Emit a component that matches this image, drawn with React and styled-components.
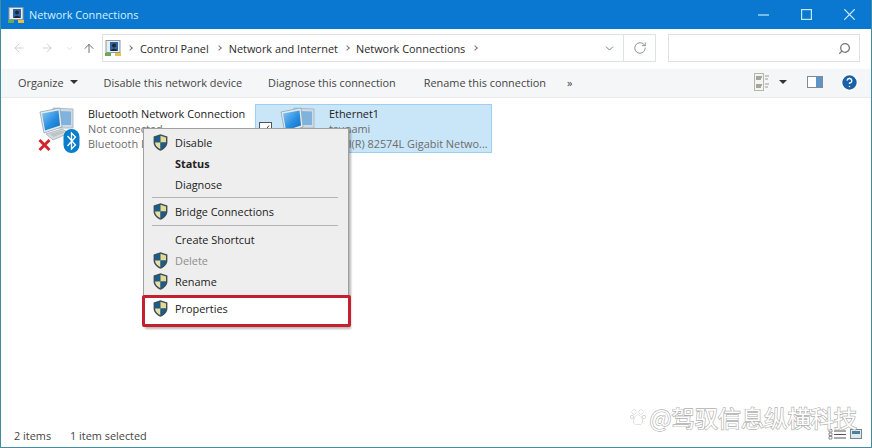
import React from 'react';
import styled, { createGlobalStyle } from 'styled-components';
import { ArrowLeft, ArrowRight, ArrowUp, ChevronDown, RotateCw, Search, HelpCircle } from 'lucide-react';

const GlobalStyle = createGlobalStyle`
  html, body {
    margin: 0;
    padding: 0;
    height: 100%;
    background: #fff;
    overflow: hidden;
  }
  * { box-sizing: border-box; }
`;

const Window = styled.div`
  position: relative;
  width: 872px;
  height: 448px;
  display: flex;
  flex-direction: column;
  overflow: hidden;
  background: #fff;
  border-left: 1px solid #3f8f9f;
  border-right: 1px solid #3f8f9f;
  border-bottom: 1px solid #3f8f9f;
  font-family: 'Open Sans', 'Noto Sans', sans-serif;
  font-size: 10.9px;
  color: #222;
`;

const TitleBar = styled.div`
  height: 29px;
  margin: 0 -1px;
  flex: none;
  background: #0a78d0;
  color: #d5f0fa;
  display: flex;
  align-items: center;
  padding: 0 1px 0 8px;
  font-size: 10.9px;
`;

const TitleText = styled.span`
  margin-left: 5px;
  flex: 1;
`;

const WinButton = styled.div`
  width: 43px;
  height: 29px;
  display: flex;
  align-items: center;
  justify-content: center;
`;

const AddressRow = styled.div`
  height: 40px;
  flex: none;
  display: flex;
  align-items: center;
  padding: 0 0 2px 11px;
  background: #fff;
`;

const NavButton = styled.div`
  width: ${p => p.$w}px;
  margin-left: ${p => p.$ml || 0}px;
  display: flex;
  justify-content: center;
  color: ${p => p.$dark ? '#666' : '#c9cdd0'};
`;

const AddressBox = styled.div`
  width: 554px;
  height: 28px;
  margin-left: 6px;
  border: 1px solid #dfe2e4;
  display: flex;
  align-items: center;
  padding-left: 2px;
  color: #2a2a2a;
`;

const Crumb = styled.span`
  margin-left: ${p => p.$gap || 8}px;
  white-space: nowrap;
`;

const CrumbArrow = styled.span`
  margin-left: ${p => p.$gap || 8}px;
  width: 4px;
  height: 4px;
  border-top: 1px solid #777;
  border-right: 1px solid #777;
  transform: rotate(45deg);
`;

const AddressEnd = styled.div`
  margin-left: auto;
  display: flex;
  align-items: center;
  height: 100%;
`;

const AddressDrop = styled.div`
  width: 31px;
  height: 100%;
  padding-left: 3px;
  display: flex;
  align-items: center;
  justify-content: center;
  color: #777;
  border-right: 1px solid #dfe2e4;
`;

const Refresh = styled.div`
  width: 31px;
  display: flex;
  justify-content: center;
  color: #888;
`;

const SearchBox = styled.div`
  width: 192px;
  height: 28px;
  margin-left: 12px;
  border: 1px solid #dfe2e4;
  display: flex;
  align-items: center;
  justify-content: flex-end;
  padding-right: 8px;
  color: #777;
`;

const Toolbar = styled.div`
  height: 29px;
  flex: none;
  display: flex;
  align-items: center;
  background: #f5f6f7;
  border-bottom: 1px solid #eaebec;
  padding: 0 0 2px 17px;
  color: #444;
`;

const ToolItem = styled.span`
  margin-right: ${p => p.$mr}px;
  display: flex;
  align-items: center;
  white-space: nowrap;
`;

const Caret = styled.span`
  width: 0;
  height: 0;
  margin-left: ${p => p.$ml || 6}px;
  border-left: 4px solid transparent;
  border-right: 4px solid transparent;
  border-top: 4px solid #333;
`;

const ToolEnd = styled.div`
  margin-left: auto;
  display: flex;
  align-items: center;
  padding-right: 12px;
`;

const ToolGap = styled.span`
  width: ${p => p.$w}px;
`;

const Content = styled.div`
  flex: 1;
  display: flex;
  align-items: flex-start;
  padding: 6px 0 0 17px;
`;

const Item = styled.div`
  width: 237px;
  height: 49px;
  display: flex;
  padding-left: ${p => p.$selected ? 23 : 19}px;
  background: ${p => p.$selected ? '#c9e5f8' : 'transparent'};
  border: 1px solid ${p => p.$selected ? '#9dd0ee' : 'transparent'};
  position: relative;
`;

const ItemIcon = styled.div`
  width: 50px;
  flex: none;
  position: relative;
`;

const ItemText = styled.div`
  display: flex;
  flex-direction: column;
  padding-top: 1px;
  line-height: 15px;
  white-space: nowrap;
  color: #6d6d6d;
`;

const ItemName = styled.span`
  color: #222;
`;

const Check = styled.svg`
  position: absolute;
  left: 3px;
  top: 17px;
`;

const Menu = styled.div`
  position: absolute;
  left: 142px;
  top: 128px;
  width: 206px;
  background: #eeeeee;
  border: 1px solid #a0a0a0;
  border-bottom: none;
  box-shadow: 2px 2px 2px rgba(0, 0, 0, 0.28);
  padding-top: 3px;
  display: flex;
  flex-direction: column;
`;

const MenuItem = styled.div`
  height: 21px;
  display: flex;
  align-items: center;
  padding-left: 9px;
  color: ${p => p.$disabled ? '#8d8d8d' : '#222'};
  font-weight: ${p => p.$bold ? 700 : 400};
`;

const MenuIcon = styled.span`
  width: 22px;
  flex: none;
  display: flex;
`;

const Separator = styled.div`
  height: 1px;
  margin: ${p => p.$top}px 10px ${p => p.$bottom}px 8px;
  background: #b4b4b4;
`;

const Highlight = styled.div`
  height: 32px;
  margin: 3px -3px 0 -2px;
  position: relative;
  background: #fff;
  border: 3px solid #c4202f;
  border-radius: 2px;
  display: flex;
  align-items: center;
  padding: 0 0 5px 8px;
`;

const StatusBar = styled.div`
  height: 22px;
  flex: none;
  display: flex;
  align-items: center;
  padding: 0 9px 1px 13px;
  color: #444;
`;

const StatusCount = styled.span`
  width: 56px;
`;

const ViewIcons = styled.div`
  margin: 0 0 3px auto;
  display: flex;
  align-items: center;
  gap: 3px;
`;

const Watermark = styled.div`
  position: absolute;
  right: 14px;
  top: 403px;
  display: flex;
  align-items: center;
  gap: 4px;
  font-family: 'Noto Sans CJK SC', 'Open Sans', sans-serif;
  font-size: 23.2px;
  line-height: 28px;
  color: #fff;
  -webkit-text-stroke: 1.3px #b0b0b0;
  paint-order: stroke fill;
  white-space: nowrap;
`;

const Shield = () => (
  <svg width="15" height="17" viewBox="0 0 15 17">
    <path d="M7.5 .3 L14.4 2.4 V8.5 C14.4 12.5 11 15.2 7.5 16.8 C4 15.2 .6 12.5 .6 8.5 V2.4 Z" fill="#3a4f5c" />
    <path d="M7.5 1.8 V8.5 H2 V3.4 Z" fill="#1d5c86" />
    <path d="M7.5 1.8 L13 3.4 V8.5 H7.5 Z" fill="#e6d994" />
    <path d="M2 8.5 H7.5 V15.2 C4.6 13.8 2.2 11.6 2 8.5 Z" fill="#e9e0a8" />
    <path d="M7.5 8.5 H13 C12.8 11.6 10.4 13.8 7.5 15.2 Z" fill="#1d5c86" />
  </svg>
);

const NetworkIcon = () => (
  <svg width="40" height="40" viewBox="0 0 40 40">
    <defs>
      <linearGradient id="frontScreen" x1="0" y1="0" x2="1" y2="1">
        <stop offset="0" stopColor="#8cc8f2" />
        <stop offset="0.55" stopColor="#2a8fe0" />
        <stop offset="1" stopColor="#0f6cc0" />
      </linearGradient>
    </defs>
    <path d="M15 3 L35 4 V23 L21 23 Z" fill="#cfdbe3" stroke="#9fb0bb" strokeWidth=".8" />
    <path d="M20 6 L33 6.5 V20 L24 20 Z" fill="#7fb2dc" />
    <path d="M2 7 L22 3 L24 22 L6 28 Z" fill="#e3ebf0" stroke="#8fa5b4" strokeWidth=".8" />
    <path d="M4 8.5 L20.5 5.5 L22 20.5 L7 25.5 Z" fill="url(#frontScreen)" />
    <path d="M8 29 L24 24 L31 28 L15 35 Z" fill="#d5dadd" stroke="#a3adb3" strokeWidth=".8" />
    <path d="M12 29 L24 25.5 L27 27.5 L15 32 Z" fill="#bcc4c9" />
  </svg>
);

const BluetoothBadge = styled.svg`
  position: absolute;
  left: 25px;
  top: 24px;
`;

const RedCross = styled.svg`
  position: absolute;
  left: -1px;
  top: 33px;
`;

const WatermarkPaw = () => (
  <svg width="16" height="18" viewBox="0 0 16 18">
    <g fill="#fff" stroke="#b0b0b0" strokeWidth="0.8">
      <circle cx="4" cy="4" r="2" />
      <circle cx="11" cy="4" r="2" />
      <circle cx="2" cy="9" r="1.6" />
      <circle cx="14" cy="9" r="1.6" />
      <path d="M8 7 C11 7 13 12 12 15 C11 17 5 17 4 15 C3 12 5 7 8 7 Z" />
    </g>
  </svg>
);

const ControlPanelIcon = () => (
  <svg width="16" height="16" viewBox="0 0 16 16">
    <rect x="1" y=".5" width="14" height="12" fill="#e8eef0" stroke="#8c9aa0" />
    <rect x="5" y="2" width="8" height="9" fill="#2b62a8" />
    <circle cx="9" cy="5.5" r="2" fill="#20262b" />
    <path d="M6 11 C6 8 12 8 12 11 Z" fill="#20262b" />
    <rect x="0" y="13" width="6" height="3" fill="#67ad4c" />
    <rect x="10" y="13" width="6" height="3" fill="#e8c14a" />
  </svg>
);

const MinimizeGlyph = () => (
  <svg width="11" height="11" viewBox="0 0 11 11">
    <path d="M0 6h11" stroke="#bdeaf5" strokeWidth="1.2" />
  </svg>
);

const MaximizeGlyph = () => (
  <svg width="11" height="11" viewBox="0 0 11 11">
    <rect x=".6" y=".6" width="9.8" height="9.8" fill="none" stroke="#bdeaf5" strokeWidth="1.2" />
  </svg>
);

const CloseGlyph = () => (
  <svg width="11" height="11" viewBox="0 0 11 11">
    <path d="M.3 .3 L10.7 10.7 M10.7 .3 L.3 10.7" stroke="#d5f0fa" strokeWidth="1.2" />
  </svg>
);

const DetailsIcon = () => (
  <svg width="15" height="18" viewBox="0 0 15 18">
    <rect x=".5" y=".5" width="9" height="17" fill="#f4f4f0" stroke="#b5b5a8" />
    <path d="M2 4h6M2 6h5M2 12h6M2 14h5" stroke="#555" />
    <path d="M11 3h4M11 6h3M11 11h4M11 14h3" stroke="#999" />
  </svg>
);

const PaneIcon = () => (
  <svg width="16" height="12" viewBox="0 0 16 12">
    <rect x=".5" y=".5" width="15" height="11" fill="#fff" stroke="#7b8b99" />
    <rect x="9" y="1" width="6" height="10" fill="#5f94c8" />
  </svg>
);

const DetailsSmall = () => (
  <svg width="19" height="11" viewBox="0 0 19 11">
    <path d="M1 .5h3v2.500H1zM1 4h3v2.500H1zM1 7.500h3v2.500H1z" fill="none" stroke="#666" strokeWidth=".7" />
    <path d="M6 2h12M6 5.500h12M6 9h12" stroke="#555" />
  </svg>
);

const LargeSmall = () => (
  <svg width="12" height="10" viewBox="0 0 12 10">
    <rect x=".5" y=".5" width="11" height="9" fill="#dfe8ee" stroke="#6f8797" />
    <rect x="2" y="2" width="8" height="3" fill="#4d7f9f" />
  </svg>
);

export default function App() {
  return (
    <>
      <GlobalStyle />
      <Window>
        <TitleBar>
          <ControlPanelIcon />
          <TitleText>Network Connections</TitleText>
          <WinButton><MinimizeGlyph /></WinButton>
          <WinButton><MaximizeGlyph /></WinButton>
          <WinButton><CloseGlyph /></WinButton>
        </TitleBar>
        <AddressRow>
          <NavButton $w={14}><ArrowLeft size={16} strokeWidth={1.5} /></NavButton>
          <NavButton $w={14} $ml={14}><ArrowRight size={16} strokeWidth={1.5} /></NavButton>
          <NavButton $w={9} $ml={11}><ChevronDown size={9} strokeWidth={1.5} /></NavButton>
          <NavButton $w={14} $ml={8} $dark><ArrowUp size={17} strokeWidth={1.6} /></NavButton>
          <AddressBox>
            <ControlPanelIcon />
            <CrumbArrow $gap={7} />
            <Crumb>Control Panel</Crumb>
            <CrumbArrow />
            <Crumb>Network and Internet</Crumb>
            <CrumbArrow $gap={7} />
            <Crumb $gap={7}>Network Connections</Crumb>
            <CrumbArrow />
            <AddressEnd>
              <AddressDrop><ChevronDown size={13} strokeWidth={1.8} /></AddressDrop>
              <Refresh><RotateCw size={14} strokeWidth={1.5} /></Refresh>
            </AddressEnd>
          </AddressBox>
          <SearchBox><Search size={13} strokeWidth={2.4} style={{ transform: 'scaleX(-1)' }} /></SearchBox>
        </AddressRow>
        <Toolbar>
          <ToolItem $mr={26}>Organize<Caret /></ToolItem>
          <ToolItem $mr={26}>Disable this network device</ToolItem>
          <ToolItem $mr={28}>Diagnose this connection</ToolItem>
          <ToolItem $mr={21}>Rename this connection</ToolItem>
          <ToolItem $mr={0}>»</ToolItem>
          <ToolEnd>
            <DetailsIcon />
            <Caret $ml={10} />
            <ToolGap $w={20} />
            <PaneIcon />
            <ToolGap $w={17} />
            <HelpCircle size={19} fill="#1a62a5" color="#fff" strokeWidth={1.8} />
          </ToolEnd>
        </Toolbar>
        <Content>
          <Item>
            <ItemIcon>
              <NetworkIcon />
              <BluetoothBadge width="17" height="24" viewBox="0 0 16 24">
                <rect x="0" y="0" width="16" height="24" rx="8" fill="#0a7ecb" />
                <path d="M4 7 L12 16 L8 20 V4 L12 8 L4 17" fill="none" stroke="#fff" strokeWidth="1.3" />
              </BluetoothBadge>
              <RedCross width="15" height="14" viewBox="0 0 14 14">
                <path d="M2 2 L12 12 M12 2 L2 12" stroke="#d2262c" strokeWidth="3" />
              </RedCross>
            </ItemIcon>
            <ItemText>
              <ItemName>Bluetooth Network Connection</ItemName>
              <span>Not connected</span>
              <span>Bluetooth Device (Personal Area...</span>
            </ItemText>
          </Item>
          <Item $selected>
            <Check width="13" height="13" viewBox="0 0 13 13">
              <rect x=".5" y=".5" width="12" height="12" fill="#fff" stroke="#555" />
              <path d="M3 7 L5.500 9.500 L10 3.500" fill="none" stroke="#444" />
            </Check>
            <ItemIcon>
              <NetworkIcon />
            </ItemIcon>
            <ItemText>
              <ItemName>Ethernet1</ItemName>
              <span>tsunami</span>
              <span>Intel(R) 82574L Gigabit Netwo...</span>
            </ItemText>
          </Item>
        </Content>
        <StatusBar>
          <StatusCount>2 items</StatusCount>
          <span>1 item selected</span>
          <ViewIcons>
            <DetailsSmall />
            <LargeSmall />
          </ViewIcons>
        </StatusBar>
        <Menu>
          <MenuItem><MenuIcon><Shield /></MenuIcon>Disable</MenuItem>
          <MenuItem $bold><MenuIcon />Status</MenuItem>
          <MenuItem><MenuIcon />Diagnose</MenuItem>
          <Separator $top={2} $bottom={3} />
          <MenuItem><MenuIcon><Shield /></MenuIcon>Bridge Connections</MenuItem>
          <Separator $top={3} $bottom={3} />
          <MenuItem><MenuIcon />Create Shortcut</MenuItem>
          <MenuItem $disabled><MenuIcon><Shield /></MenuIcon>Delete</MenuItem>
          <MenuItem><MenuIcon><Shield /></MenuIcon>Rename</MenuItem>
          <Highlight><MenuIcon><Shield /></MenuIcon>Properties</Highlight>
        </Menu>
        <Watermark><WatermarkPaw />@驾驭信息纵横科技</Watermark>
      </Window>
    </>
  );
}
